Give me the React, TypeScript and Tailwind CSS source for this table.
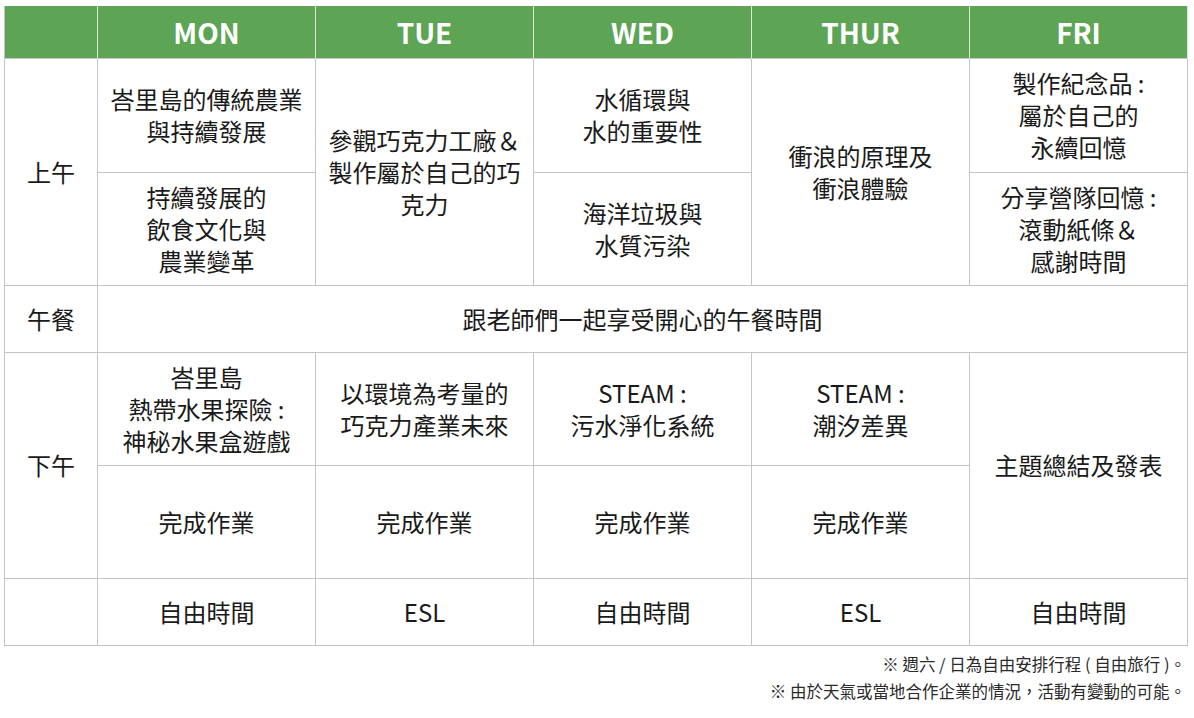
const days = ['MON', 'TUE', 'WED', 'THUR', 'FRI']

const cell = 'border border-[#c4c4c4] text-center align-middle px-2 leading-[32px]'
const head = 'border-x border-[#d9ead6] bg-[#5da555] text-white text-center align-middle font-bold text-[28px]'

const Lines = ({ text }: { text: string }) => (
  <>
    {text.split('\n').map((line, i) => (
      <div key={i} className="whitespace-pre">
        {line}
      </div>
    ))}
  </>
)

export default function App() {
  return (
    <div
      className="w-[1194px] h-[718px] bg-white text-[#1a1a1a] text-[24px]"
      style={{ fontFamily: '"Noto Sans CJK TC", "Noto Sans", sans-serif' }}
    >
      <div className="pt-[6px] pl-[4px]">
        <table className="table-fixed border-collapse w-[1184px]">
          <colgroup>
            <col className="w-[93px]" />
            {days.map((d) => (
              <col key={d} className="w-[218px]" />
            ))}
          </colgroup>
          <thead>
            <tr className="h-[52px]">
              <th className={`${head} border-l-[#c4c4c4]`}></th>
              {days.map((d) => (
                <th key={d} className={head}>
                  {d}
                </th>
              ))}
            </tr>
          </thead>
          <tbody>
            <tr className="h-[114px]">
              <td rowSpan={2} className={cell}>
                上午
              </td>
              <td className={cell}>
                <Lines text={'峇里島的傳統農業\n與持續發展'} />
              </td>
              <td rowSpan={2} className={cell}>
                <Lines text={'參觀巧克力工廠＆\n製作屬於自己的巧\n克力'} />
              </td>
              <td className={cell}>
                <Lines text={'水循環與\n水的重要性'} />
              </td>
              <td rowSpan={2} className={cell}>
                <Lines text={'衝浪的原理及\n衝浪體驗'} />
              </td>
              <td className={cell}>
                <Lines text={'製作紀念品 :\n屬於自己的\n永續回憶'} />
              </td>
            </tr>
            <tr className="h-[113px]">
              <td className={cell}>
                <Lines text={'持續發展的\n飲食文化與\n農業變革'} />
              </td>
              <td className={cell}>
                <Lines text={'海洋垃圾與\n水質污染'} />
              </td>
              <td className={cell}>
                <Lines text={'分享營隊回憶 :\n滾動紙條＆\n感謝時間'} />
              </td>
            </tr>
            <tr className="h-[67px]">
              <td className={cell}>午餐</td>
              <td colSpan={5} className={cell}>
                跟老師們一起享受開心的午餐時間
              </td>
            </tr>
            <tr className="h-[113px]">
              <td rowSpan={2} className={cell}>
                下午
              </td>
              <td className={cell}>
                <Lines text={'峇里島\n熱帶水果探險 :\n神秘水果盒遊戲'} />
              </td>
              <td className={cell}>
                <Lines text={'以環境為考量的\n巧克力產業未來'} />
              </td>
              <td className={cell}>
                <Lines text={'STEAM :\n污水淨化系統'} />
              </td>
              <td className={cell}>
                <Lines text={'STEAM :\n潮汐差異'} />
              </td>
              <td rowSpan={2} className={cell}>
                主題總結及發表
              </td>
            </tr>
            <tr className="h-[113px]">
              <td className={cell}>完成作業</td>
              <td className={cell}>完成作業</td>
              <td className={cell}>完成作業</td>
              <td className={cell}>完成作業</td>
            </tr>
            <tr className="h-[67px]">
              <td className={cell}></td>
              <td className={cell}>自由時間</td>
              <td className={cell}>ESL</td>
              <td className={cell}>自由時間</td>
              <td className={cell}>ESL</td>
              <td className={cell}>自由時間</td>
            </tr>
          </tbody>
        </table>
      </div>
      <div className="pr-[8px] pt-[5px] text-right text-[16.5px] leading-[27px] text-[#2a2a2a]">
        <div>※ 週六 / 日為自由安排行程 ( 自由旅行 )。</div>
        <div>※ 由於天氣或當地合作企業的情況，活動有變動的可能。</div>
      </div>
    </div>
  )
}
